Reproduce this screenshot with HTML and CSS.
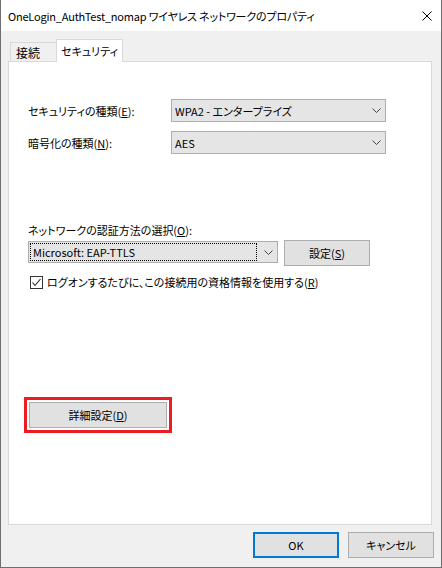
FILE: index.html
```html
<!DOCTYPE html>
<html lang="ja">
  <head>
    <meta charset="UTF-8" />
    <meta name="viewport" content="width=device-width, initial-scale=1.0" />
    <title>ワイヤレス ネットワークのプロパティ</title>
    <link rel="stylesheet" href="styles.css">
  </head>
  <body>
    <div class="window">
      <!-- タイトルバー -->
      <div class="titlebar">
        <span class="title">OneLogin_AuthTest_nomap ワイヤレス ネットワークのプロパティ</span>
        <svg class="close" width="10" height="10" viewBox="0 0 10 10">
          <path d="M0.5 0.5 L9.5 9.5 M9.5 0.5 L0.5 9.5" stroke="#000" stroke-width="1" fill="none" />
        </svg>
      </div>

      <!-- タブ -->
      <div class="tabs">
        <div class="tab">接続</div>
        <div class="tab active">セキュリティ</div>
      </div>

      <!-- セキュリティ タブの中身 -->
      <div class="panel">
        <div class="row">
          <div class="label">セキュリティの種類(<u>E</u>):</div>
          <div class="combo wide">
            <span>WPA2 - エンタープライズ</span>
            <svg class="chev" width="9" height="5" viewBox="0 0 9 5"><polyline points="0.5,0.5 4.5,4.5 8.5,0.5" fill="none" stroke="#444" /></svg>
          </div>
        </div>
        <div class="row">
          <div class="label">暗号化の種類(<u>N</u>):</div>
          <div class="combo wide">
            <span>AES</span>
            <svg class="chev" width="9" height="5" viewBox="0 0 9 5"><polyline points="0.5,0.5 4.5,4.5 8.5,0.5" fill="none" stroke="#444" /></svg>
          </div>
        </div>

        <div class="auth-label">ネットワークの認証方法の選択(<u>O</u>):</div>
        <div class="auth-row">
          <div class="combo auth">
            <span class="focus">Microsoft: EAP-TTLS</span>
            <svg class="chev" width="9" height="5" viewBox="0 0 9 5"><polyline points="0.5,0.5 4.5,4.5 8.5,0.5" fill="none" stroke="#444" /></svg>
          </div>
          <button class="btn settings">設定(<u>S</u>)</button>
        </div>

        <div class="check-row">
          <span class="checkbox">
            <svg width="11" height="11" viewBox="0 0 11 11"><polyline points="1.5,5.5 4,8.5 9.5,2" fill="none" stroke="#222" stroke-width="1.1" /></svg>
          </span>
          <span class="check-label">ログオンするたびに、この接続用の資格情報を使用する(<u>R</u>)</span>
        </div>

        <div class="highlight">
          <button class="btn advanced">詳細設定(<u>D</u>)</button>
        </div>
      </div>

      <!-- 下のボタン -->
      <div class="footer">
        <button class="btn default">OK</button>
        <button class="btn">キャンセル</button>
      </div>
    </div>
  </body>
</html>
```

FILE: styles.css
```css
body {
  margin: 0;
}
.window {
  width: 442px;
  height: 568px;
  box-sizing: border-box;
  border: solid 1px #6e6e6e;
  border-top: none;
  background: #f0f0f0;
  font-family: "Noto Sans CJK JP", "Noto Sans", sans-serif;
  font-size: 11px;
  font-feature-settings: "palt";
  color: #000;
}
.titlebar {
  height: 31px;
  background: #fff;
  display: flex;
  align-items: center;
  justify-content: space-between;
  padding: 0 9px 0 7px;
}
.title {
  letter-spacing: -0.2px;
}
.close {
  display: block;
}
.tabs {
  display: flex;
  align-items: flex-end;
  height: 23px;
  margin-top: 8px;
  padding-left: 9px;
}
.tab {
  width: 46px;
  height: 20px;
  box-sizing: border-box;
  border: solid 1px #d9d9d9;
  border-right: none;
  border-bottom: none;
  padding-left: 5px;
  line-height: 19px;
  font-size: 12px;
}
.tab.active {
  width: 67px;
  height: 23px;
  border-right: solid 1px #d9d9d9;
  background: #fff;
  padding-left: 0;
  text-align: center;
  line-height: 22px;
  position: relative;
  z-index: 1;
  font-size: 11px;
}
.panel {
  width: 424px;
  height: 464px;
  box-sizing: border-box;
  margin: -1px 0 0 7px;
  border: solid 1px #d9d9d9;
  background: #fff;
  padding: 37px 0 0 19px;
}
.row {
  display: flex;
  align-items: center;
  height: 23px;
}
.row + .row {
  margin-top: 9px;
}
.label {
  width: 143px;
}
.combo {
  box-sizing: border-box;
  border: solid 1px #adadad;
  background: #e5e5e5;
  display: flex;
  align-items: center;
  justify-content: space-between;
}
.combo.wide {
  width: 215px;
  height: 23px;
  padding: 0 4px 0 3px;
}
.chev {
  display: block;
  flex-shrink: 0;
}
.auth-label {
  margin-top: 68px;
  line-height: 16px;
}
.auth-row {
  display: flex;
  align-items: flex-start;
  margin-top: 2px;
}
.combo.auth {
  width: 250px;
  height: 22px;
  margin-top: 1px;
  padding: 1px 4px 1px 1px;
}
.focus {
  flex: 1;
  height: 18px;
  box-sizing: border-box;
  border: dotted 1px #000;
  padding-left: 2px;
  line-height: 16px;
  margin-right: 7px;
}
.btn {
  width: 86px;
  height: 26px;
  box-sizing: border-box;
  border: solid 1px #adadad;
  background: #e1e1e1;
  font: inherit;
  color: #000;
  padding: 0;
}
.btn.settings {
  margin-left: 6px;
}
.check-row {
  display: flex;
  align-items: center;
  height: 16px;
  margin-top: 8px;
}
.checkbox {
  width: 13px;
  height: 13px;
  box-sizing: border-box;
  border: solid 1px #333;
  background: #fff;
  margin-left: 2px;
  display: flex;
  align-items: center;
  justify-content: center;
}
.checkbox svg {
  display: block;
}
.check-label {
  margin-left: 4px;
}
.highlight {
  display: inline-block;
  margin: 107px 0 0 -4px;
  border: solid 3px #ed1c24;
  padding: 2px;
}
.highlight .btn {
  display: block;
}
.btn.advanced {
  width: 138px;
}
.footer {
  display: flex;
  justify-content: flex-end;
  gap: 9px;
  padding: 7px 7px 0 0;
}
.btn.default {
  border-color: #0078d7;
  box-shadow: inset 0 0 0 1px #0078d7;
}
```
